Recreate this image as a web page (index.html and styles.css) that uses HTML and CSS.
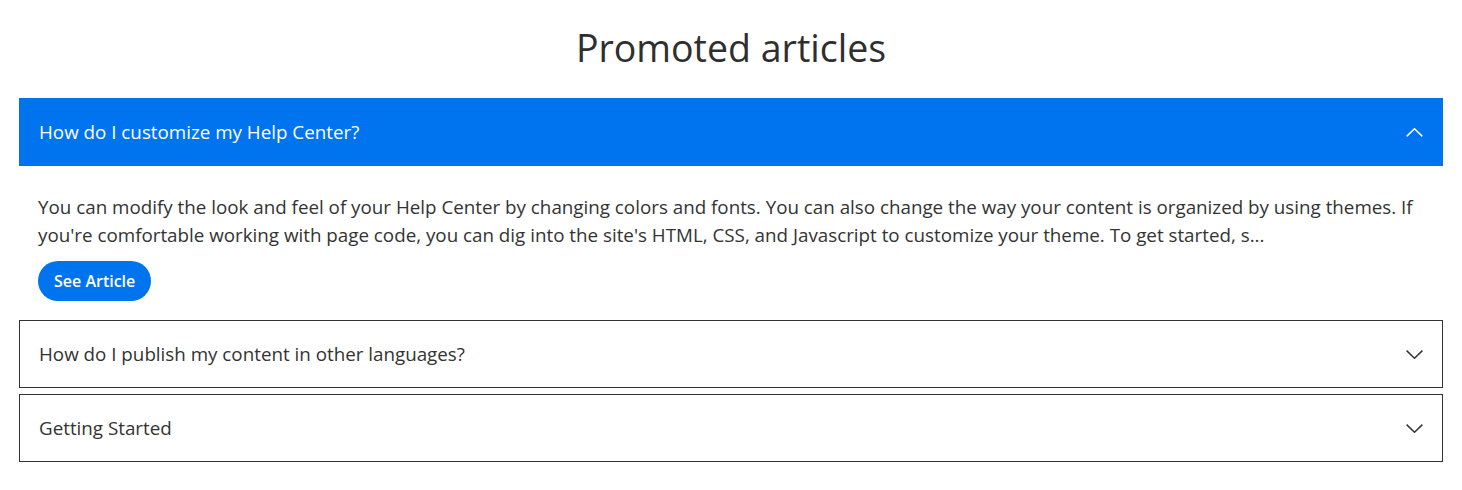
FILE: index.html
```html
<!DOCTYPE html>
<html lang="en">
<head>
<meta charset="utf-8">
<title>Promoted articles</title>
<link rel="stylesheet" href="styles.css">
</head>
<body>
<section class="promoted">
  <h2 class="title">Promoted articles</h2>
  <div class="accordion">
    <div class="item open">
      <button class="item-head">
        <span>How do I customize my Help Center?</span>
        <svg class="chev" width="17" height="9" viewBox="0 0 17 9"><path d="M0.6 8.4 L8.5 0.8 L16.4 8.4" fill="none" stroke="currentColor" stroke-width="1.5"/></svg>
      </button>
      <div class="item-body">
        <p>You can modify the look and feel of your Help Center by changing colors and fonts. You can also change the way your content is organized by using themes. If you're comfortable working with page code, you can dig into the site's HTML, CSS, and Javascript to customize your theme. To get started, s...</p>
        <a class="btn" href="#">See Article</a>
      </div>
    </div>
    <div class="item">
      <button class="item-head">
        <span>How do I publish my content in other languages?</span>
        <svg class="chev" width="17" height="9" viewBox="0 0 17 9"><path d="M0.6 0.6 L8.5 8.2 L16.4 0.6" fill="none" stroke="currentColor" stroke-width="1.5"/></svg>
      </button>
    </div>
    <div class="item">
      <button class="item-head">
        <span>Getting Started</span>
        <svg class="chev" width="17" height="9" viewBox="0 0 17 9"><path d="M0.6 0.6 L8.5 8.2 L16.4 0.6" fill="none" stroke="currentColor" stroke-width="1.5"/></svg>
      </button>
    </div>
  </div>
</section>
</body>
</html>
```
FILE: styles.css
```css
* { box-sizing: border-box; }
html, body { margin: 0; padding: 0; background: #fff; }
body {
  font-family: "Open Sans", "Noto Sans", sans-serif;
  color: #333;
}
.promoted {
  padding: 20px 19px 0;
}
.title {
  margin: 0 0 22px;
  text-align: center;
  font-size: 37.5px;
  font-weight: 400;
  line-height: 56px;
  color: #2f2f2f;
}
.accordion {
  display: flex;
  flex-direction: column;
  gap: 6px;
}
.item-head {
  display: flex;
  align-items: center;
  justify-content: space-between;
  width: 100%;
  height: 68px;
  padding: 0 19px 0 19px;
  border: 1px solid #333;
  background: #fff;
  font-family: inherit;
  font-size: 18.8px;
  color: #333;
  text-align: left;
  cursor: pointer;
}
.open .item-head {
  background: #0073ef;
  border-color: #0073ef;
  color: #fff;
}
.chev { display: block; }
.item-body {
  padding: 27px 19px 13px;
}
.item-body p {
  margin: 0 0 12px;
  font-size: 18.8px;
  line-height: 28px;
  color: #333;
}
.btn {
  display: inline-flex;
  align-items: center;
  height: 40px;
  padding: 0 16px;
  border-radius: 20px;
  background: #0073ef;
  color: #fff;
  font-size: 16px;
  font-weight: 600;
  text-decoration: none;
}
```
